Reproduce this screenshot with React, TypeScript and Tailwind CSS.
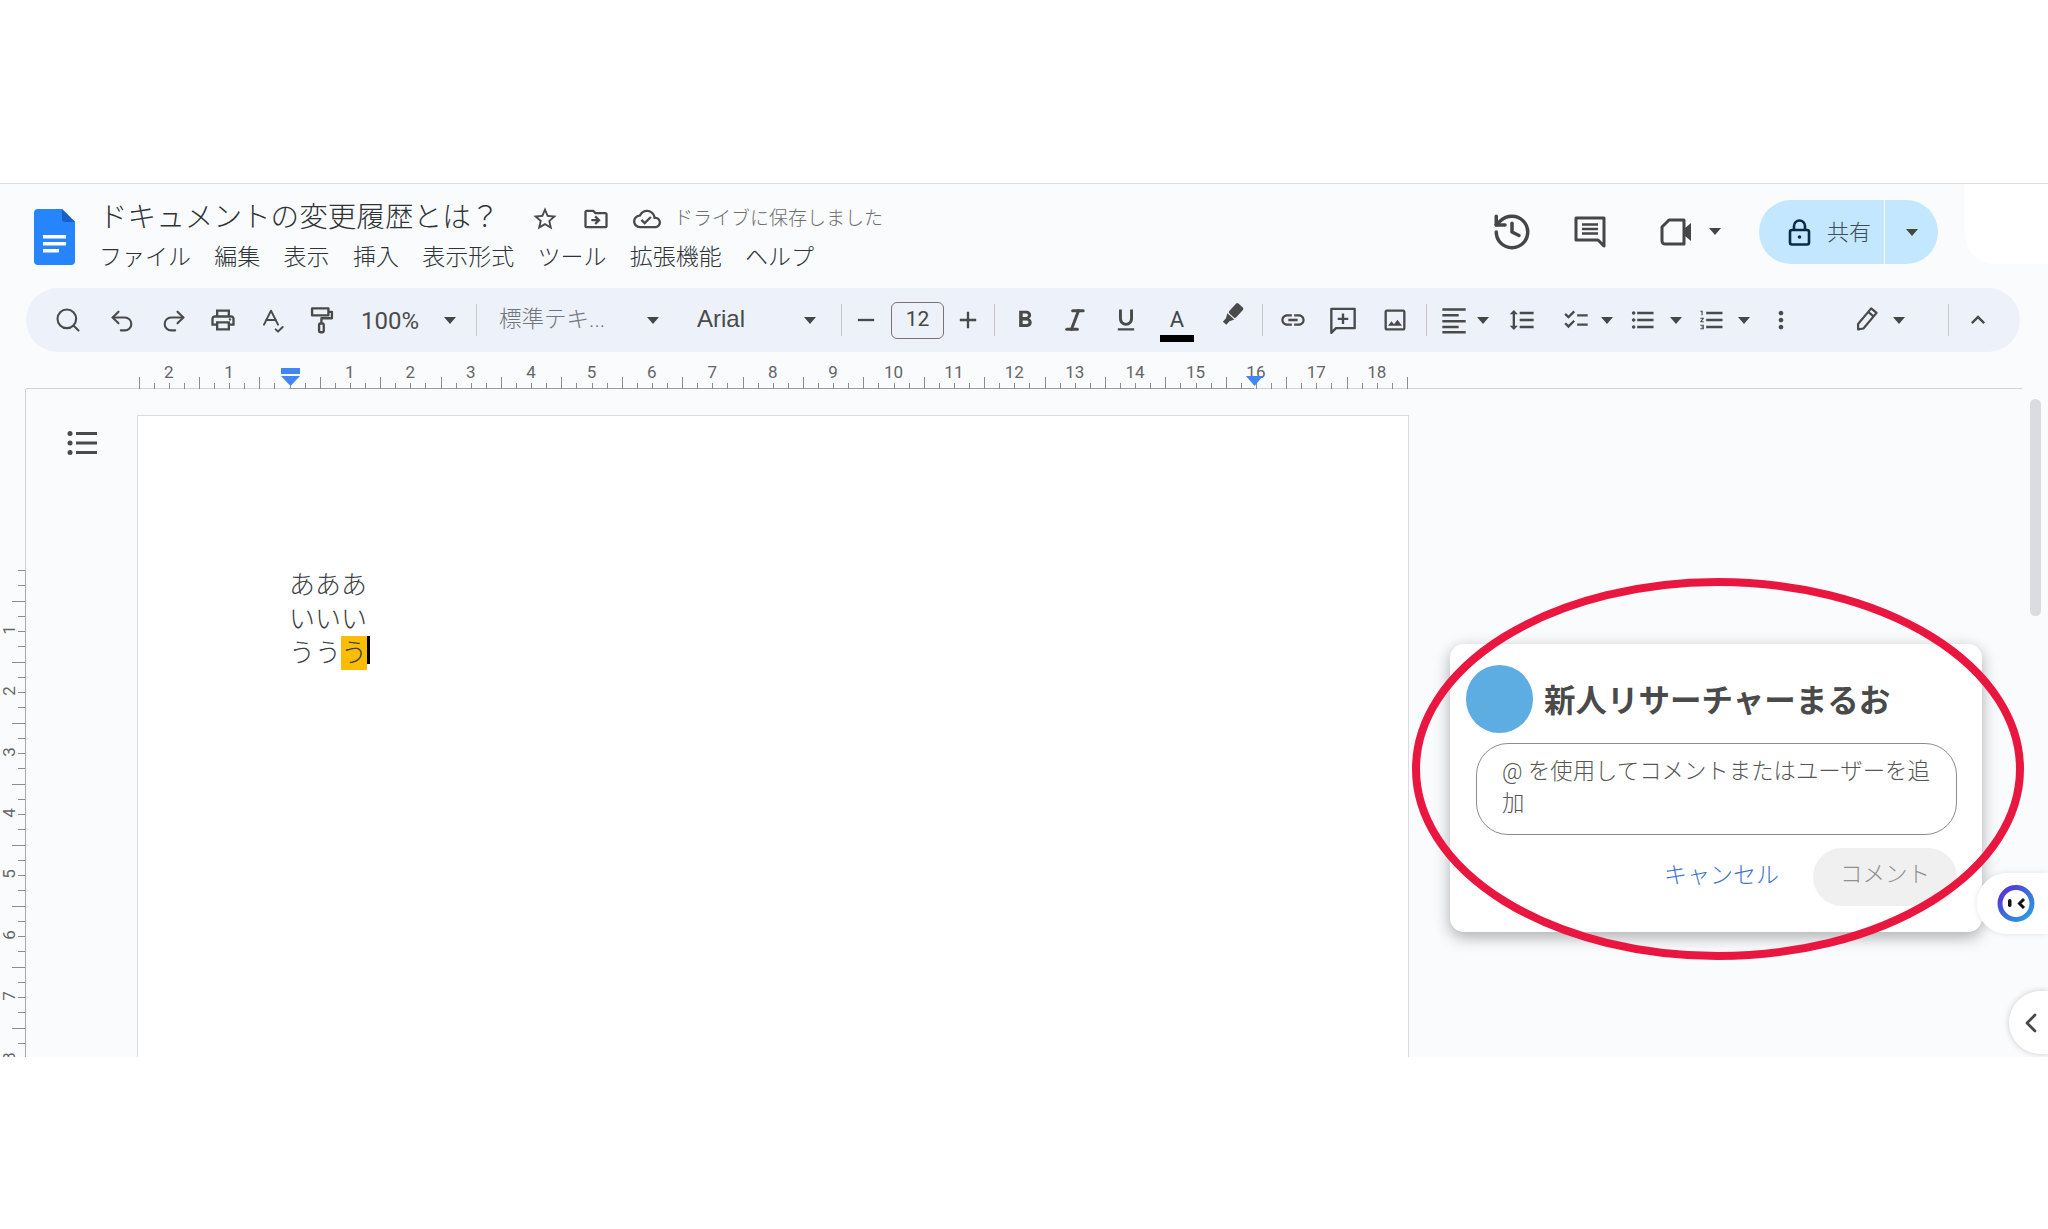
import type { ComponentType } from "react";
import {
  MdChecklist,
  MdExpandLess,
  MdFormatBold,
  MdFormatLineSpacing,
  MdFormatListBulleted,
  MdFormatListNumbered,
  MdFormatUnderlined,
  MdInsertLink,
  MdMoreVert,
  MdOutlineCloudDone,
  MdOutlineDriveFileMove,
  MdOutlineImage,
  MdOutlinePrint,
  MdOutlineStarBorder,
  MdAdd,
  MdRemove,
} from "react-icons/md";
import { ChevronLeft, History, Italic, Redo2, Search, SpellCheck, Undo2 } from "lucide-react";

type IconType = ComponentType<{ size?: number; className?: string }>;

const MENU = ["ファイル", "編集", "表示", "挿入", "表示形式", "ツール", "拡張機能", "ヘルプ"];

const Caret = ({ className = "" }: { className?: string }) => (
  <svg width="12" height="7" viewBox="0 0 12 7" className={`shrink-0 ${className}`}>
    <path d="M0 0h12L6 7z" fill="#444746" />
  </svg>
);

const Divider = ({ className = "" }: { className?: string }) => (
  <div className={`w-px h-[32px] bg-[#c7c7c7] shrink-0 ${className}`} />
);

const Tool = ({ icon: Icon, className = "" }: { icon: IconType; className?: string }) => (
  <span className={`w-[28px] h-[28px] flex items-center justify-center shrink-0 text-[#4a4a4a] ${className}`}>
    <Icon size={28} />
  </span>
);

const SearchIcon: IconType = () => <Search size={30} strokeWidth={1.8} />;
const Undo: IconType = () => <Undo2 size={28} strokeWidth={1.8} />;
const Redo: IconType = () => <Redo2 size={28} strokeWidth={1.8} />;
const Spell: IconType = () => <SpellCheck size={32} strokeWidth={1.7} />;
const ItalicIcon: IconType = () => <Italic size={28} strokeWidth={2.6} />;

const Roller: IconType = () => (
  <svg width="28" height="28" viewBox="0 0 24 24" fill="none" stroke="currentColor" strokeWidth="2" strokeLinejoin="round">
    <path d="M3.500 2h14v6h-14zM17.500 5h3v5.500h-9V15" />
    <rect x="9.500" y="15" width="4" height="7.500" rx="1" />
  </svg>
);

const Marker: IconType = () => (
  <svg width="28" height="28" viewBox="0 0 24 24" fill="currentColor">
    <g transform="rotate(42 12 12)">
      <rect x="8" y="1" width="8" height="11.500" rx="1.500" />
      <path d="M8 13.500h8l-2 4v4h-4v-4z" />
    </g>
  </svg>
);

const PencilIcon: IconType = () => (
  <svg width="28" height="28" viewBox="0 0 24 24" fill="none" stroke="currentColor" strokeWidth="1.900" strokeLinejoin="round">
    <g transform="rotate(40 12 12)">
      <path d="M9 1.500h6v17.500l-3 3.500-3-3.500zM9 5.500h6" />
    </g>
  </svg>
);

const AddComment: IconType = () => (
  <svg width="28" height="28" viewBox="0 0 24 24" fill="none" stroke="currentColor" strokeWidth="2">
    <path d="M2 2.500h20v16.500H6l-4 4zM12 6.500v9M7.500 11h9" strokeLinejoin="round" />
  </svg>
);

const AlignLines: IconType = () => (
  <svg width="28" height="28" viewBox="0 0 24 24" stroke="currentColor" strokeWidth="2.200">
    <path d="M2 3h20M2 8h14M2 13h20M2 18h14M2 22.500h20" />
  </svg>
);

const CommentsIcon = () => (
  <svg width="32" height="32" viewBox="0 0 32 32" fill="none" stroke="#444746">
    <path d="M2 2h28v28l-6-6H2z" strokeWidth="3" strokeLinejoin="round" />
    <path d="M8 8.500h16M8 13h16M8 17.500h16" strokeWidth="2.500" />
  </svg>
);

const MeetIcon = () => (
  <svg width="34" height="28" viewBox="0 0 34 28" fill="none" stroke="#444746">
    <path d="M9 2h15v24H5a3 3 0 0 1-3-3V9z" strokeWidth="3" strokeLinejoin="round" />
    <path d="M25 10l6-5v18l-6-5z" fill="#444746" stroke="none" />
  </svg>
);

const LockIcon = () => (
  <svg width="23" height="27" viewBox="0 0 23 27" fill="none" stroke="#0b2a45" strokeWidth="2.600">
    <rect x="2" y="11" width="19" height="14.500" rx="2" />
    <path d="M6 11V7a5.500 5.500 0 0 1 11 0v4" />
    <circle cx="11.500" cy="18" r="1.800" fill="#0b2a45" stroke="none" />
  </svg>
);

const OutlineIcon = () => (
  <svg width="30" height="26" viewBox="0 0 30 26" fill="#4a4a4a">
    <circle cx="3" cy="3.500" r="2.500" />
    <circle cx="3" cy="13" r="2.500" />
    <circle cx="3" cy="22.500" r="2.500" />
    <path d="M9 2h21v3H9zM9 11.500h21v3H9zM9 21h21v3H9z" />
  </svg>
);

// Docs page icon with the folded corner
const DocsLogo = () => (
  <svg width="41" height="56" viewBox="0 0 41 56" className="shrink-0">
    <path d="M4 0h24l13 13v39a4 4 0 0 1-4 4H4a4 4 0 0 1-4-4V4a4 4 0 0 1 4-4z" fill="#2684fc" />
    <path d="M28 0l13 13H31a3 3 0 0 1-3-3z" fill="#1a5fc8" />
    <path d="M9 26h23v3.500H9zM9 33h23v3.500H9zM9 40h16v3.500H9z" fill="#fff" />
  </svg>
);

const HorizontalRuler = () => {
  const origin = 289.5;
  const step = 15.1;
  const ticks = Array.from({ length: 85 }, (_, i) => i - 10);
  const labels = [-2, -1, 1, 2, 3, 4, 5, 6, 7, 8, 9, 10, 11, 12, 13, 14, 15, 16, 17, 18];
  return (
    <svg width="2048" height="37" viewBox="0 352 2048 37" className="block">
      <path d="M26 388.500H2022" stroke="#d0d2d6" />
      <path d="M289 388.500H1254" stroke="#9b9b9b" />
      {ticks.map((i) => {
        const x = Math.round(origin + i * step) + 0.5;
        const long = ((i % 4) + 4) % 4 === 2;
        return <path key={i} d={`M${x} ${long ? 377 : 383}V389`} stroke="#8d8d8d" />;
      })}
      {labels.map((n) => (
        <text
          key={n}
          x={origin + n * 60.4}
          y="378"
          textAnchor="middle"
          fontSize="17"
          fill="#666"
          fontFamily="Roboto, sans-serif"
        >
          {Math.abs(n)}
        </text>
      ))}
      <rect x="281" y="368" width="19" height="6" fill="#4285f4" />
      <path d="M281 376h19l-9.500 10z" fill="#4285f4" />
      <path d="M1246 376h17l-8.500 10z" fill="#4285f4" />
    </svg>
  );
};

const VerticalRuler = () => {
  const ticks = Array.from({ length: 33 }, (_, i) => i);
  const labels = [1, 2, 3, 4, 5, 6, 7, 8];
  return (
    <svg width="26" height="668" viewBox="0 389 26 668" className="block shrink-0">
      <path d="M25.500 389V570" stroke="#d0d2d6" />
      <path d="M25.500 570V1057" stroke="#a8a8a8" />
      {ticks.map((i) => {
        const y = Math.round(570 + i * 15.25) + 0.5;
        return <path key={i} d={`M${i % 4 === 2 ? 12 : 18} ${y}H25`} stroke="#8d8d8d" />;
      })}
      {labels.map((n) => (
        <text
          key={n}
          transform={`translate(15 ${569 + n * 61}) rotate(-90)`}
          textAnchor="middle"
          fontSize="17"
          fill="#666"
          fontFamily="Roboto, sans-serif"
        >
          {n}
        </text>
      ))}
    </svg>
  );
};

const Mascot = () => (
  <svg width="38" height="39" viewBox="0 0 38 39">
    <defs>
      <linearGradient id="ring" x1="0" y1="0" x2="1" y2="1">
        <stop offset="0" stopColor="#5b2bd6" />
        <stop offset="1" stopColor="#22a7e0" />
      </linearGradient>
    </defs>
    <circle cx="19" cy="19.500" r="16" fill="#fff" stroke="url(#ring)" strokeWidth="5" />
    <rect x="11" y="15" width="3.500" height="8" rx="1.700" fill="#111" />
    <path d="M27 15l-4.500 4.500L27 24" fill="none" stroke="#111" strokeWidth="3" />
  </svg>
);

const App = () => {
  return (
    <div className="w-full h-[1229px] bg-white overflow-hidden font-['Roboto','Noto_Sans_CJK_JP',sans-serif] text-[#444746]">
      <div className="h-[183px]" />
      <div className="relative h-[874px] bg-[#f9fbfd] border-t border-[#dcdcdc] overflow-hidden">
        {/* title bar */}
        <header className="flex h-[104px] pl-[34px] pr-[110px]">
          <div className="mt-[25px]">
            <DocsLogo />
          </div>
          <div className="ml-[24px] pt-[15px]">
            <div className="flex items-center h-[36px]">
              <h1 className="text-[28.600px] leading-[36px] w-[393px] font-light text-[#2f3336] whitespace-nowrap">
                ドキュメントの変更履歴とは？
              </h1>
              <Tool icon={MdOutlineStarBorder} className="ml-[39px] mt-[4px]" />
              <Tool icon={MdOutlineDriveFileMove} className="ml-[23px] mt-[4px]" />
              <Tool icon={MdOutlineCloudDone} className="ml-[23px] mt-[4px]" />
              <span className="ml-[13px] text-[19px] font-light text-[#6f6f6f] mt-[4px]">ドライブに保存しました</span>
            </div>
            <nav className="flex gap-[23.300px] mt-[8px] text-[23px] leading-[30px] font-light text-[#2f3336]">
              {MENU.map((item) => (
                <span key={item}>{item}</span>
              ))}
            </nav>
          </div>
          <div className="ml-auto mt-[16px] h-[64px] flex items-center">
            <span className="w-[42px] h-[42px] text-[#444746]">
              <History size={42} strokeWidth={2} />
            </span>
            <span className="ml-[41px] w-[32px] h-[32px]">
              <CommentsIcon />
            </span>
            <span className="ml-[54px] w-[34px] h-[28px]">
              <MeetIcon />
            </span>
            <Caret className="ml-[15px] -mt-[2px]" />
            <div className="ml-[38px] flex h-[64px] w-[179px] rounded-full bg-[#c2e7ff] overflow-hidden">
              <div className="w-[126px] flex items-center pl-[29px] gap-[16px] border-r border-white text-[#3f4d5a]">
                <LockIcon />
                <span className="text-[22px] font-light">共有</span>
              </div>
              <div className="flex-1 flex items-center justify-center">
                <Caret />
              </div>
            </div>
          </div>
        </header>

        {/* formatting toolbar */}
        <div className="mx-[26px] h-[64px] w-[1994px] rounded-full bg-[#edf2fa] flex items-center">
          <Tool icon={SearchIcon} className="ml-[28px]" />
          <Tool icon={Undo} className="ml-[26px] mt-[1px]" />
          <Tool icon={Redo} className="ml-[24px] mt-[1px]" />
          <Tool icon={MdOutlinePrint} className="ml-[21px]" />
          <Tool icon={Spell} className="ml-[20px]" />
          <Tool icon={Roller} className="ml-[23px]" />
          <span className="ml-[25px] w-[59px] text-[24px] shrink-0 mt-[1px] text-[#4a4a4a]">100%</span>
          <Caret className="ml-[24px]" />
          <Divider className="ml-[20px]" />
          <span className="ml-[22px] w-[109px] text-[22.500px] font-light text-[#70757a] whitespace-nowrap shrink-0">
            標準テキ...
          </span>
          <Caret className="ml-[39px]" />
          <span className="ml-[38px] w-[48px] text-[24px] font-['Liberation_Sans',sans-serif] shrink-0 -mt-[2px] text-[#4a4a4a]">
            Arial
          </span>
          <Caret className="ml-[59px]" />
          <Divider className="ml-[25px]" />
          <Tool icon={MdRemove} className="ml-[10px]" />
          <div className="ml-[11px] w-[53px] h-[37px] rounded-[6px] border border-[#747775] flex items-center justify-center text-[21px] shrink-0">
            12
          </div>
          <Tool icon={MdAdd} className="ml-[10px]" />
          <Divider className="ml-[12px]" />
          <Tool icon={MdFormatBold} className="ml-[16px]" />
          <Tool icon={ItalicIcon} className="ml-[22px]" />
          <Tool icon={MdFormatUnderlined} className="ml-[23px]" />
          <div className="ml-[20px] w-[34px] h-[40px] flex flex-col items-center justify-end shrink-0 mt-[3px]">
            <span className="text-[22px] leading-[30px]">A</span>
            <span className="w-[34px] h-[7px] bg-black" />
          </div>
          <Tool icon={Marker} className="ml-[24px] -mt-[10px]" />
          <Divider className="ml-[16px]" />
          <Tool icon={MdInsertLink} className="ml-[16px]" />
          <Tool icon={AddComment} className="ml-[22px]" />
          <Tool icon={MdOutlineImage} className="ml-[24px]" />
          <Divider className="ml-[17px]" />
          <Tool icon={AlignLines} className="ml-[13px]" />
          <Caret className="ml-[9px]" />
          <Tool icon={MdFormatLineSpacing} className="ml-[19px]" />
          <Tool icon={MdChecklist} className="ml-[26px]" />
          <Caret className="ml-[11px]" />
          <Tool icon={MdFormatListBulleted} className="ml-[16px]" />
          <Caret className="ml-[13px]" />
          <Tool icon={MdFormatListNumbered} className="ml-[16px]" />
          <Caret className="ml-[12px]" />
          <Tool icon={MdMoreVert} className="ml-[17px]" />
          <Tool icon={PencilIcon} className="ml-[57px]" />
          <Caret className="ml-[13px]" />
          <Divider className="ml-[43px]" />
          <Tool icon={MdExpandLess} className="ml-[15px]" />
        </div>

        <HorizontalRuler />

        {/* document area */}
        <div className="flex">
          <VerticalRuler />
          <div className="w-[111px] shrink-0 pt-[41px] pl-[41px]">
            <OutlineIcon />
          </div>
          <div className="mt-[26px] w-[1272px] h-[700px] shrink-0 bg-white border border-[#dadce0] pt-[152px] pl-[151px] text-[26px] leading-[34px] font-light text-[#3c4043]">
            <p>あああ</p>
            <p>いいい</p>
            <p className="flex">
              うう
              <span className="bg-[#fbbc04] w-[26px] h-[34px]">う</span>
              <span className="w-[3px] h-[28px] bg-black" />
            </p>
          </div>
        </div>

        <div className="absolute left-[2030px] top-[215px] w-[11px] h-[217px] rounded-full bg-[#dadce0]" />
        <div className="absolute left-[1965px] -top-px w-[83px] h-[81px] bg-white rounded-bl-[30px]" />

        {/* comment card */}
        <div className="absolute left-[1450px] top-[460px] w-[532px] h-[288px] rounded-[14px] bg-white shadow-[0_5px_16px_rgba(0,0,0,0.32)]">
          <div className="flex items-center pl-[16px] pt-[21px]">
            <div className="w-[67px] h-[68px] rounded-full bg-[#5dade2]" />
            <span className="ml-[11px] mt-[5px] text-[31.500px] font-bold text-[#4a4a4a] whitespace-nowrap">
              新人リサーチャーまるお
            </span>
          </div>
          <div className="mt-[10px] ml-[26px] w-[481px] h-[92px] rounded-[32px] border border-[#8c8c8c] pl-[25px] pr-[18px] pt-[11px] text-[22.400px] leading-[32px] text-[#555] font-light">
            @ を使用してコメントまたはユーザーを追加
          </div>
          <div className="mt-[13px] pr-[25px] flex items-center justify-end gap-[34px]">
            <span className="text-[23px] font-light text-[#3f72cf] pb-[2px]">キャンセル</span>
            <span className="w-[144px] h-[58px] rounded-full bg-[#f0f0f0] flex items-center justify-center text-[22.500px] font-light text-[#8f8f8f] pb-[5px]">
              コメント
            </span>
          </div>
        </div>

        {/* side pills */}
        <div className="absolute left-[1977px] top-[689px] w-[71px] h-[61px] rounded-l-[30px] bg-white shadow-[0_0_6px_rgba(0,0,0,0.1)] flex items-center pl-[20px]">
          <Mascot />
        </div>
        <div className="absolute left-[2009px] top-[807px] w-[39px] h-[63px] rounded-l-[32px] bg-white shadow-[0_0_6px_rgba(0,0,0,0.2)] flex items-center pl-[6px] text-[#444746]">
          <ChevronLeft size={32} strokeWidth={2} />
        </div>

        {/* red highlight ring */}
        <svg width="612" height="382" viewBox="0 0 612 382" className="absolute left-[1412px] top-[394px] pointer-events-none">
          <ellipse cx="306" cy="191" rx="302" ry="187" fill="none" stroke="#e9173f" strokeWidth="8" />
        </svg>
      </div>
    </div>
  );
};

export default App;
